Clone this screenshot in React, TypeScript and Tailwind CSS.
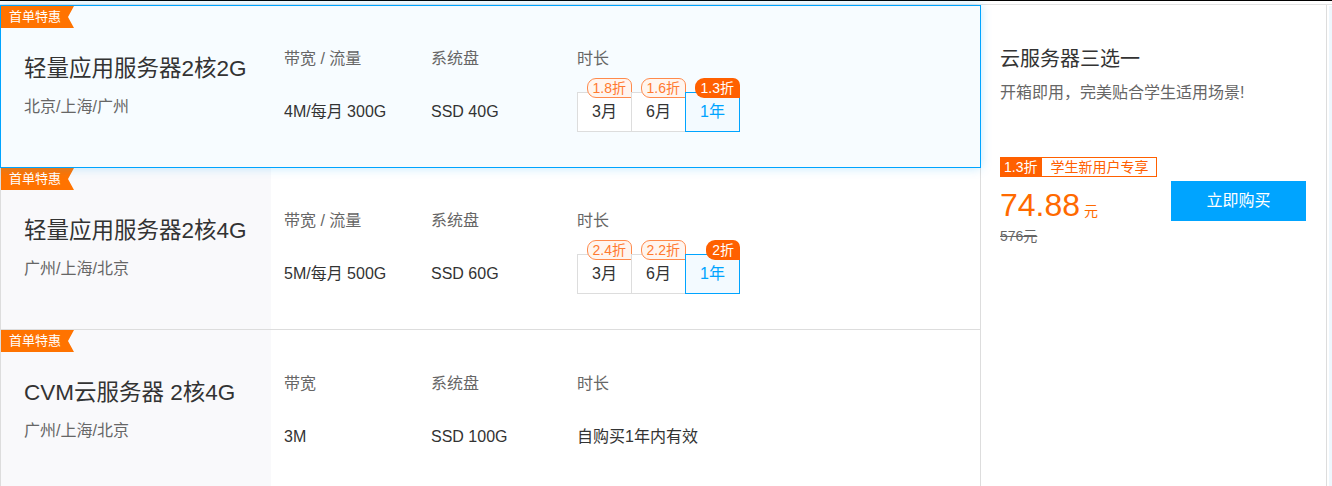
const font = { fontFamily: '"Liberation Sans", "Noto Sans CJK SC", sans-serif' };

type Plan = {
  title: string;
  region: string;
  netLabel: string;
  net: string;
  disk: string;
  durations?: { label: string; off: string }[];
  note?: string;
  active?: boolean;
};

const plans: Plan[] = [
  {
    title: "轻量应用服务器2核2G",
    region: "北京/上海/广州",
    netLabel: "带宽 / 流量",
    net: "4M/每月 300G",
    disk: "SSD 40G",
    durations: [
      { label: "3月", off: "1.8折" },
      { label: "6月", off: "1.6折" },
      { label: "1年", off: "1.3折" },
    ],
    active: true,
  },
  {
    title: "轻量应用服务器2核4G",
    region: "广州/上海/北京",
    netLabel: "带宽 / 流量",
    net: "5M/每月 500G",
    disk: "SSD 60G",
    durations: [
      { label: "3月", off: "2.4折" },
      { label: "6月", off: "2.2折" },
      { label: "1年", off: "2折" },
    ],
  },
  {
    title: "CVM云服务器 2核4G",
    region: "广州/上海/北京",
    netLabel: "带宽",
    net: "3M",
    disk: "SSD 100G",
    note: "自购买1年内有效",
  },
];

const Badge = () => (
  <div className="absolute left-0 top-0 h-[22px] w-[73px] bg-[#ff7300] pl-[8px] text-[13px] leading-[22px] text-white [clip-path:polygon(0_0,100%_0,calc(100%_-_6px)_50%,100%_100%,0_100%)]">
    首单特惠
  </div>
);

const Durations = ({ items }: { items: { label: string; off: string }[] }) => (
  <div className="mt-[21px] flex">
    {items.map((d, i) => {
      const on = i === items.length - 1;
      return (
        <div
          key={d.label}
          className={
            on
              ? "relative z-10 -ml-[1px] flex h-[40px] w-[55px] items-center justify-center border border-[#00a4ff] bg-[#f3faff] text-[16px] text-[#00a4ff]"
              : i === 0
              ? "relative flex h-[40px] w-[55px] items-center justify-center border border-[#dddddd] bg-white text-[16px] text-[#333]"
              : "relative -ml-[1px] flex h-[40px] w-[55px] items-center justify-center border border-[#dddddd] bg-white text-[16px] text-[#333]"
          }
        >
          {d.label}
          <span
            className={
              on
                ? "absolute right-[-1px] top-[-15px] h-[20px] rounded-tl-[9px] rounded-tr-[7px] rounded-bl-[9px] bg-[#ff6000] px-[6px] text-[14px] leading-[20px] text-white"
                : "absolute right-[-1px] top-[-15px] h-[20px] rounded-tl-[9px] rounded-tr-[7px] rounded-bl-[9px] border border-[#ff8a4c] bg-[#fff5ef] px-[5px] text-[14px] leading-[18px] text-[#ff7a30]"
            }
          >
            {d.off}
          </span>
        </div>
      );
    })}
  </div>
);

const Row = ({ p, last }: { p: Plan; last?: boolean }) => (
  <div
    className={
      p.active
        ? "relative z-10 flex h-[163px] border border-[#00a4ff] bg-[#f7fcff] shadow-[0_0_10px_rgba(0,164,255,0.25)]"
        : last
        ? "relative flex h-[160px] border-l border-r border-[#dddddd] bg-white"
        : "relative flex h-[162px] border-b border-l border-r border-[#dddddd] bg-white"
    }
  >
    <Badge />
    <div className={p.active ? "w-[270px] pl-[23px] pt-[48px]" : "w-[270px] bg-[#f9f9fb] pl-[23px] pt-[48px]"}>
      <div className="text-[22.5px] leading-[30px] text-[#333]">{p.title}</div>
      <div className="mt-[11px] text-[16px] leading-[24px] text-[#666]">{p.region}</div>
    </div>
    <div className={last ? "flex pl-[13px] pt-[42px]" : "flex pl-[13px] pt-[41px]"}>
      <div className="w-[147px]">
        <div className="text-[16px] leading-[24px] text-[#666]">{p.netLabel}</div>
        <div className="mt-[29px] text-[16px] leading-[24px] text-[#333]">{p.net}</div>
      </div>
      <div className="w-[146px]">
        <div className="text-[16px] leading-[24px] text-[#666]">系统盘</div>
        <div className="mt-[29px] text-[16px] leading-[24px] text-[#333]">{p.disk}</div>
      </div>
      <div className="w-[200px]">
        <div className="text-[16px] leading-[24px] text-[#666]">时长</div>
        {p.durations ? (
          <Durations items={p.durations} />
        ) : (
          <div className="mt-[29px] text-[16px] leading-[24px] text-[#333]">{p.note}</div>
        )}
      </div>
    </div>
  </div>
);

export default function App() {
  return (
    <div className="h-[486px] w-[1332px] overflow-hidden bg-white" style={font}>
      <div className="h-[1px] bg-black" />
      <div className="mt-[3px] flex border-t border-[#e3e3e3]">
        <div className="w-[981px]">
          {plans.map((p, i) => (
            <Row key={p.title} p={p} last={i === plans.length - 1} />
          ))}
        </div>
        <div className="h-[490px] w-[346px] border-r border-[#dddddd] pl-[19px] pr-[20px] pt-[40px]">
          <div className="text-[20px] leading-[28px] text-[#333]">云服务器三选一</div>
          <div className="mt-[8px] text-[16px] leading-[24px] text-[#666]">开箱即用，完美贴合学生适用场景!</div>
          <div className="mt-[52px] flex h-[20px] w-fit text-[14px] leading-[18px]">
            <span className="bg-[#ff6000] px-[4px] leading-[20px] text-white">1.3折</span>
            <span className="border border-[#ff6000] px-[8px] text-[#ff6000]">学生新用户专享</span>
          </div>
          <div className="mt-[4px] flex items-start justify-between">
            <div className="pt-[6px]">
              <div className="flex items-baseline text-[#ff6a00]">
                <span className="text-[32px] leading-[36px]">74.88</span>
                <span className="ml-[4px] text-[14px]">元</span>
              </div>
              <div className="mt-[3px] text-[14px] leading-[20px] text-[#666] line-through">576元</div>
            </div>
            <button className="h-[40px] w-[135px] bg-[#00a4ff] text-[16px] text-white">立即购买</button>
          </div>
        </div>
        <div className="ml-[2px] mt-[1px] h-[490px] flex-1 bg-[#eef7fd]" />
      </div>
    </div>
  );
}
